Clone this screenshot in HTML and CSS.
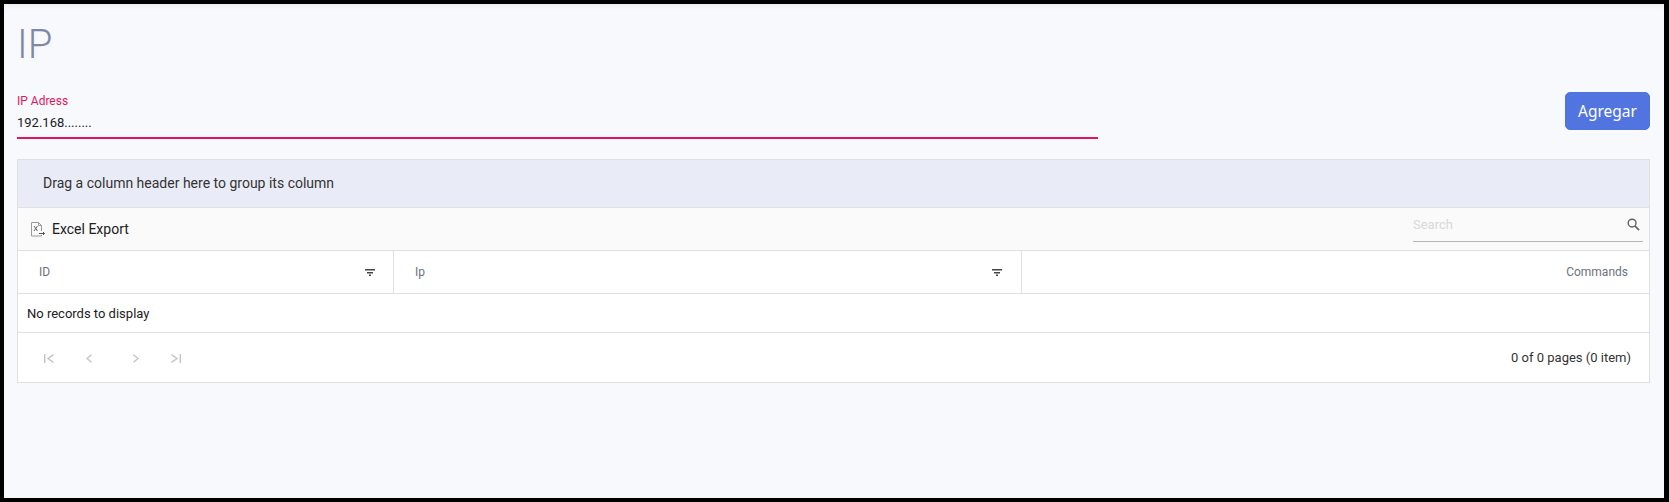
FILE: index.html
```html
<!DOCTYPE html>
<html lang="en">
<head>
    <meta charset="UTF-8">
    <meta name="viewport" content="width=device-width, initial-scale=1.0">
    <title>IP</title>
    <link rel="stylesheet" href="styles.css">
</head>
<body>
    <div class="page">
        <h1 class="title">IP</h1>

        <div class="form-row">
            <div class="field">
                <label class="field-label" for="ip">IP Adress</label>
                <input class="field-input" type="text" id="ip" value="192.168........">
            </div>
            <button class="btn-add">Agregar</button>
        </div>

        <div class="grid">
            <div class="group-area">Drag a column header here to group its column</div>

            <div class="toolbar">
                <div class="export">
                    <svg class="export-icon" width="14" height="15" viewBox="0 0 14 15" fill="none">
                        <path d="M10.5 9V3.5L7.5 0.5H0.5V14H10.5V13" stroke="#9a9a9a" stroke-width="1"/>
                        <path d="M7.5 0.5V3.5H10.5" stroke="#9a9a9a" stroke-width="1"/>
                        <path d="M3 4L6.5 9M6.5 4L3 9" stroke="#666" stroke-width="1"/>
                        <path d="M8 11.5H13.5M12 10L13.5 11.5L12 13" stroke="#555" stroke-width="1"/>
                    </svg>
                    <span>Excel Export</span>
                </div>
                <div class="search">
                    <span class="search-text">Search</span>
                    <svg width="13" height="13" viewBox="0 0 14 14" fill="none">
                        <circle cx="5.5" cy="5.5" r="4.2" stroke="#616161" stroke-width="1.5"/>
                        <path d="M8.5 8.5L13 13" stroke="#616161" stroke-width="1.7"/>
                    </svg>
                </div>
            </div>

            <div class="header-row">
                <div class="col col-id">
                    <span>ID</span>
                    <svg class="filter" width="10" height="7" viewBox="0 0 10 7"><path d="M0 0H10V1.5H0zM2 3H8V4.5H2zM4 5.5H6V7H4z" fill="#444"/></svg>
                </div>
                <div class="col col-ip">
                    <span>Ip</span>
                    <svg class="filter" width="10" height="7" viewBox="0 0 10 7"><path d="M0 0H10V1.5H0zM2 3H8V4.5H2zM4 5.5H6V7H4z" fill="#444"/></svg>
                </div>
                <div class="col col-commands">Commands</div>
            </div>

            <div class="empty-row">No records to display</div>

            <div class="pager">
                <div class="pager-nav">
                    <svg width="10" height="9" viewBox="0 0 10 9" fill="none"><path d="M0.7 0V9M9.5 0.7L4 4.5L9.5 8.3" stroke="#c4c4c4" stroke-width="1.4"/></svg>
                    <svg class="nav-prev" width="6" height="9" viewBox="0 0 6 9" fill="none"><path d="M5.5 0.7L1 4.5L5.5 8.3" stroke="#c4c4c4" stroke-width="1.4"/></svg>
                    <svg class="nav-next" width="6" height="9" viewBox="0 0 6 9" fill="none"><path d="M0.5 0.7L5 4.5L0.5 8.3" stroke="#c4c4c4" stroke-width="1.4"/></svg>
                    <svg class="nav-last" width="10" height="9" viewBox="0 0 10 9" fill="none"><path d="M9.3 0V9M0.5 0.7L6 4.5L0.5 8.3" stroke="#c4c4c4" stroke-width="1.4"/></svg>
                </div>
                <div class="pager-info">0 of 0 pages (0 item)</div>
            </div>
        </div>
    </div>
</body>
</html>
```

FILE: styles.css
```css
* {
    box-sizing: border-box;
}
body {
    margin: 0;
    font-family: Roboto, "Liberation Sans", sans-serif;
    background-color: #000;
}
.page {
    height: 502px;
    border: solid #000;
    border-width: 4px 5px 4px 4px;
    padding: 0 14px 0 13px;
    background-color: #f8f9fd;
    box-shadow: inset 0 8px 8px -8px rgba(0, 0, 0, 0.08);
}
.title {
    margin: 0;
    padding-top: 17px;
    height: 84px;
    font-size: 40px;
    line-height: 47px;
    font-weight: 300;
    color: #7e89a5;
}
.form-row {
    display: flex;
    justify-content: space-between;
    align-items: flex-start;
    height: 71px;
}
.field {
    width: 1081px;
    border-bottom: 2px solid #e3165b;
    height: 51px;
    padding-top: 6px;
}
.field-label {
    display: block;
    font-size: 12px;
    line-height: 14px;
    color: #e3165b;
}
.field-input {
    display: block;
    width: 100%;
    margin-top: 5px;
    padding: 0;
    border: none;
    outline: none;
    background: transparent;
    font-family: inherit;
    font-size: 13px;
    line-height: 20px;
    height: 20px;
    color: #212121;
}
.btn-add {
    width: 85px;
    height: 38px;
    margin-top: 4px;
    padding: 0;
    border: 1px solid #4f74e0;
    border-radius: 5px;
    background-color: #5174e0;
    color: #fff;
    font-family: "Noto Sans", sans-serif;
    font-size: 15.5px;
    cursor: pointer;
}
.grid {
    border: 1px solid #e0e0e0;
    background: #fff;
    height: 224px;
    display: flex;
    flex-direction: column;
}
.group-area {
    height: 48px;
    padding: 0 0 2px 25px;
    display: flex;
    align-items: center;
    background-color: #e9ebf6;
    border-bottom: 1px solid #e0e0e0;
    font-size: 14px;
    color: #333;
}
.toolbar {
    height: 43px;
    display: flex;
    justify-content: space-between;
    padding: 0 6px 0 13px;
    background-color: #fafafa;
    border-bottom: 1px solid #e0e0e0;
}
.export {
    display: flex;
    align-items: center;
    gap: 7px;
    font-size: 14px;
    color: #212121;
}
.search {
    width: 230px;
    height: 34px;
    display: flex;
    justify-content: space-between;
    align-items: center;
    padding-right: 3px;
    border-bottom: 1px solid #b5b5b5;
}
.search-text {
    font-size: 13px;
    color: #d8d8d8;
}
.header-row {
    height: 43px;
    display: flex;
    border-bottom: 1px solid #e0e0e0;
    font-size: 12px;
    font-weight: 400;
    color: #6b7280;
}
.col {
    display: flex;
    align-items: center;
    justify-content: space-between;
}
.col-id {
    width: 376px;
    padding: 0 18px 0 21px;
    border-right: 1px solid #e0e0e0;
}
.col-ip {
    width: 628px;
    padding: 0 19px 0 21px;
    border-right: 1px solid #e0e0e0;
}
.col-commands {
    flex: 1;
    justify-content: flex-end;
    padding-right: 21px;
}
.empty-row {
    height: 39px;
    padding-left: 9px;
    display: flex;
    align-items: center;
    border-bottom: 1px solid #e0e0e0;
    font-size: 13px;
    color: #212121;
}
.pager {
    flex: 1;
    display: flex;
    justify-content: space-between;
    align-items: center;
    padding: 0 18px 0 26px;
}
.pager-nav {
    display: flex;
    align-items: center;
    padding-top: 2px;
}
.nav-prev {
    margin-left: 32px;
}
.nav-next {
    margin-left: 41px;
}
.nav-last {
    margin-left: 32px;
}
.pager-info {
    font-size: 13px;
    color: #333;
}
```
